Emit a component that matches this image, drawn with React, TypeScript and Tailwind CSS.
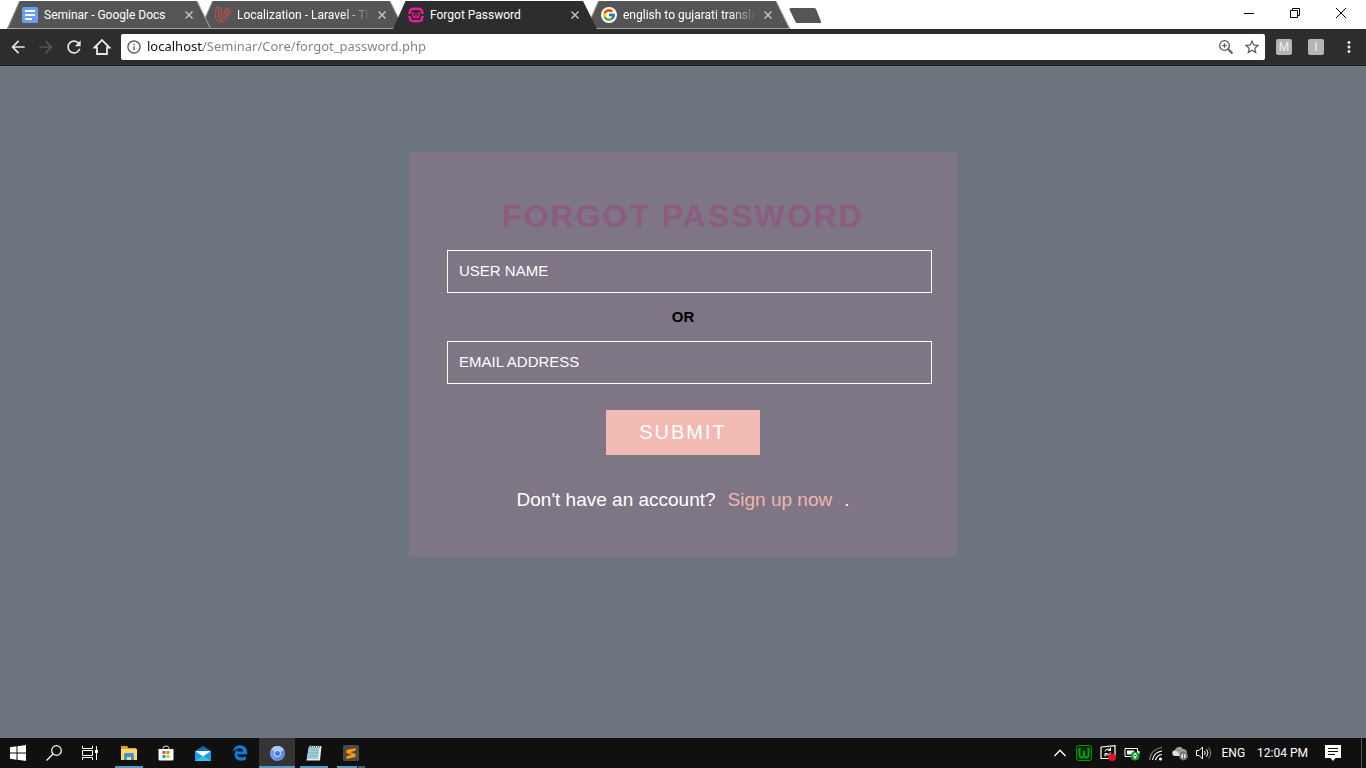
import type { ReactNode } from "react";
import { MdArrowBack, MdArrowForward, MdRefresh, MdStarBorder, MdMoreVert, MdInfoOutline } from "react-icons/md";
import { FcGoogle } from "react-icons/fc";
import { FaLaravel } from "react-icons/fa";
import { FaEdgeLegacy } from "react-icons/fa6";

function DocsIcon() {
  return (
    <svg viewBox="0 0 16 16" className="size-4">
      <rect width="16" height="16" rx="1.5" fill="#689df6" />
      <path d="M3 3h10v2H3zM3 7h10v2H3zM3 11h7v2H3z" fill="#fff" />
    </svg>
  );
}

function WampIcon() {
  return (
    <svg viewBox="0 0 16 16" className="size-4" fill="none" stroke="#f0149b">
      <path d="M1.800 7V5.500Q1.800 1.800 5.500 1.800h5q3.700 0 3.700 3.700V7M1.800 9v1.500q0 3.700 3.700 3.700h5q3.700 0 3.700-3.700V9" strokeWidth="2.400" />
      <path d="M0 6.500h3M0 9.500h3M13 6.500h3M13 9.500h3" strokeWidth="1" />
      <path d="M5 5v3.800Q5 10.700 6.500 10.700T8 9V6.500V9Q8 10.700 9.500 10.700T11 8.800V5" stroke="none" />
      <path d="M5 5v4.200l1.200 1.300h.8L8 9.500V6.500v3l1 1h.8L11 9.200V5" strokeWidth="1.400" />
    </svg>
  );
}

function GoogleBadge() {
  return (
    <span className="flex size-4 items-center justify-center rounded-full bg-white">
      <FcGoogle size={14} />
    </span>
  );
}

type TabInfo = { title: string; icon: ReactNode; active?: boolean; faded?: boolean; layer: string };

const tabs: TabInfo[] = [
  { title: "Seminar - Google Docs", icon: <DocsIcon />, layer: "z-30" },
  { title: "Localization - Laravel - Th", icon: <FaLaravel size={17} color="#c1514d" stroke="#c1514d" strokeWidth={14} />, faded: true, layer: "z-20" },
  { title: "Forgot Password", icon: <WampIcon />, active: true, layer: "z-40" },
  { title: "english to gujarati transla", icon: <GoogleBadge />, faded: true, layer: "z-10" },
];

function Tab({ title, icon, active, faded, layer }: TabInfo) {
  return (
    <div className={`relative -mr-[11px] flex h-[29px] w-[204px] shrink items-center pl-[15px] pr-[14px] ${layer}`}>
      <svg viewBox="0 0 204 29" preserveAspectRatio="none" className="absolute inset-0 -z-10 size-full">
        <path d="M0 29 L12.500 1 H190 L204 29Z" fill={active ? "#2d2d2d" : "#555"} />
        {!active && <path d="M12.500 1 L.5 28.500 H203.500 L190 1" fill="none" stroke="#a5a5a5" />}
      </svg>
      <span className="flex size-4 shrink-0 items-center justify-center">{icon}</span>
      <button
        type="button"
        className={`ml-[6px] min-w-0 flex-1 overflow-hidden whitespace-nowrap text-left text-xs text-white ${faded ? "mask-r-from-80%" : ""}`}
      >
        {title}
      </button>
      <button type="button" aria-label={`Close ${title}`} className="ml-1 flex size-4 items-center justify-center">
        <svg viewBox="0 0 8 8" className="size-2" stroke="#c0c0c0" strokeWidth="1.500">
          <path d="M.5.5l7 7M7.500.5l-7 7" />
        </svg>
      </button>
    </div>
  );
}

function TabStrip() {
  return (
    <div className="flex h-[29px] items-start bg-white font-[Roboto,sans-serif]">
      <div className="isolate flex min-w-0 pl-[7px]">
        {tabs.map((t) => (
          <Tab key={t.title} {...t} />
        ))}
      </div>
      <button type="button" aria-label="New tab" className="ml-[10px] mt-2">
        <svg viewBox="0 0 33 15" className="h-[15px] w-[33px]">
          <path d="M2 0h23q1.500 0 2 1l5 12.500q.5 1.500-1 1.500H8.500q-1.500 0-2-1L.5 1.500Q0 0 2 0z" fill="#555" />
        </svg>
      </button>
      <div className="ml-auto flex pr-[2px]">
        <button type="button" aria-label="Minimize" className="flex h-[26px] w-[46px] items-center justify-center">
          <svg viewBox="0 0 10 10" className="size-[10px]" stroke="#000"><path d="M0 5.500h10" /></svg>
        </button>
        <button type="button" aria-label="Restore" className="flex h-[26px] w-[46px] items-center justify-center">
          <svg viewBox="0 0 10 10" className="size-[10px]" stroke="#000" fill="none"><path d="M.5 2.500h7v7h-7zM2.500 2.500v-2h7v7h-2" /></svg>
        </button>
        <button type="button" aria-label="Close" className="flex h-[26px] w-[46px] items-center justify-center">
          <svg viewBox="0 0 10 10" className="size-[10px]" stroke="#000"><path d="M0 0l10 10M10 0L0 10" /></svg>
        </button>
      </div>
    </div>
  );
}

function ToolButton({ label, children }: { label: string; children: ReactNode }) {
  return (
    <button type="button" aria-label={label} className="flex size-7 shrink-0 items-center justify-center">
      {children}
    </button>
  );
}

function Extension({ letter }: { letter: string }) {
  return (
    <button type="button" className="flex size-4 items-center justify-center rounded-xs bg-[#b5b5b5] font-[Roboto,sans-serif] text-xs text-[#eee]">
      {letter}
    </button>
  );
}

function Toolbar() {
  return (
    <div className="flex h-[37px] items-center border-b border-[#1c1c1c] bg-[#2d2d2d] pl-1">
      <ToolButton label="Back"><MdArrowBack size={20} color="#e6e6e6" /></ToolButton>
      <ToolButton label="Forward"><MdArrowForward size={20} color="#555" /></ToolButton>
      <ToolButton label="Reload"><MdRefresh size={20} color="#e6e6e6" /></ToolButton>
      <ToolButton label="Home">
        <svg viewBox="0 0 18 18" className="size-[18px]" fill="none" stroke="#e6e6e6" strokeWidth="1.800">
          <path d="M1.500 9.500 9 2l7.500 7.500H14V16H4V9.500z" />
        </svg>
      </ToolButton>
      <div className="ml-[5px] flex h-[26px] min-w-0 flex-1 items-center rounded-xs bg-white pl-[5px] pr-1">
        <MdInfoOutline size={16} color="#5a5a5a" className="shrink-0" />
        <input
          type="text"
          aria-label="Address"
          defaultValue="localhost/Seminar/Core/forgot_password.php"
          className="ml-[5px] min-w-0 flex-1 bg-[linear-gradient(to_right,#111_56px,#808080_56px)] bg-clip-text text-[13px] text-transparent outline-none"
        />
        <button type="button" aria-label="Zoom" className="mr-1 flex size-[26px] items-center justify-center">
          <svg viewBox="0 0 16 16" className="size-4" fill="none" stroke="#5a5a5a" strokeWidth="1.300"><circle cx="6.500" cy="6.500" r="4.800" /><path d="M10 10l4.500 4.500" strokeWidth="1.900" /><path d="M6.500 4.200v4.600M4.200 6.500h4.600" strokeWidth="1.200" /></svg>
        </button>
        <button type="button" aria-label="Bookmark this page" className="flex size-[18px] items-center justify-center"><MdStarBorder size={18} color="#5a5a5a" /></button>
      </div>
      <div className="flex items-center pl-[11px]">
        <div className="flex gap-4">
          <Extension letter="M" />
          <Extension letter="I" />
        </div>
        <button type="button" aria-label="Menu" className="ml-2 flex w-[34px] justify-center"><MdMoreVert size={18} color="#e6e6e6" /></button>
      </div>
    </div>
  );
}

function Field({ type, label }: { type: string; label: string }) {
  return (
    <input
      type={type}
      aria-label={label}
      placeholder={label}
      className="block h-[43px] w-[calc(100%+13px)] border border-white bg-transparent px-[11px] pb-[2px] text-[15px] text-white outline-none placeholder:text-white placeholder:opacity-100"
    />
  );
}

function ForgotPassword() {
  return (
    <main className="flex-1 bg-[#6c757d] pt-[86px] font-['Liberation_Sans',Arial,sans-serif]">
      <form className="mx-auto w-full max-w-[548px] bg-[#7e7585] px-[38px] pb-[45px] pt-[44px] text-center">
        <h1 className="mb-[14px] text-[32px] font-bold leading-10 tracking-[2px] text-[#8d5c80]">FORGOT PASSWORD</h1>
        <Field type="text" label="USER NAME" />
        <p className="my-3 text-[15px] font-bold leading-6 text-black">OR</p>
        <Field type="email" label="EMAIL ADDRESS" />
        <button type="submit" className="mt-[26px] h-[45px] w-[154px] bg-[#f1bab2] pb-[2px] text-[20px] tracking-[2px] text-white">
          SUBMIT
        </button>
        <p className="mt-[33px] text-[19px] leading-6 text-white">
          Don't have an account?
          <a href="#signup" className="mx-3 text-[#f1b5ad]">Sign up now</a>
          .
        </p>
      </form>
    </main>
  );
}

function TaskItem({ label, running, selected, stacked, children }: { label: string; running?: boolean; selected?: boolean; stacked?: boolean; children: ReactNode }) {
  return (
    <button
      type="button"
      aria-label={label}
      className={`relative flex h-[30px] w-9 items-center justify-center ${selected ? "bg-[#343434]" : ""}`}
    >
      {children}
      {running && (
        <span className={`absolute bottom-0 flex h-[2px] bg-[#4f9cc0] ${selected ? "inset-x-0" : "inset-x-1"}`}>
          {stacked && <span className="ml-auto h-full w-2 border-l border-[#101010] bg-[#35677f]" />}
        </span>
      )}
    </button>
  );
}

function Tray({ label, children }: { label: string; children: ReactNode }) {
  return (
    <button type="button" aria-label={label} className="flex h-[30px] w-6 items-center justify-center">
      {children}
    </button>
  );
}

function Taskbar() {
  return (
    <footer className="flex h-[30px] items-center bg-[#101010] font-[Roboto,sans-serif] text-white">
      <TaskItem label="Start">
        <svg viewBox="0 0 16 16" className="size-4" fill="#fff"><path d="M0 2.200 6.500 1.300v6.200H0zM7.500 1.150 16 0v7.500H7.500zM0 8.500h6.500v6.200L0 13.800zM7.500 8.500H16V16l-8.500-1.150z" /></svg>
      </TaskItem>
      <TaskItem label="Search">
        <svg viewBox="0 0 16 16" className="size-4" fill="none" stroke="#fff" strokeWidth="1.200"><circle cx="10.500" cy="5.500" r="4.800" /><path d="M7 9 .5 15.500" /></svg>
      </TaskItem>
      <TaskItem label="Task view">
        <svg viewBox="0 0 16 16" className="size-4" fill="none" stroke="#fff"><path d="M.5 1v2.500h10V1M.5 15v-2.500h10V15M.5 5.500h10v5H.5zM14.500 1v4M14.500 8v7" /><path d="M13 5h3v3h-3z" fill="#fff" stroke="none" /></svg>
      </TaskItem>
      <div className="ml-[3px] flex gap-px">
        <TaskItem label="File Explorer" running>
          <svg viewBox="0 0 16 14" className="h-[14px] w-4"><path d="M0 0h6l1.500 2H15v4H0z" fill="#e3a21a" /><path d="M0 3h16v11H0z" fill="#ffd766" /><path d="M3 14V8.500Q3 7 4.500 7h7Q13 7 13 8.500V14h-3v-3H6v3z" fill="#3b97dd" /></svg>
        </TaskItem>
        <TaskItem label="Store">
          <svg viewBox="0 0 16 16" className="size-4"><path d="M5 5V3.500Q5 1 8 1t3 2.500V5" fill="none" stroke="#ddd" /><path d="M.5 4h15v10q0 1.500-1.500 1.500H2Q.5 15.500.5 14z" fill="#fff" /><path d="M4.500 6H7.500v3H4.500z" fill="#f25022" /><path d="M8.500 6h3v3h-3z" fill="#7fba00" /><path d="M4.500 10h3v3h-3z" fill="#00a4ef" /><path d="M8.500 10h3v3h-3z" fill="#ffb900" /></svg>
        </TaskItem>
        <TaskItem label="Mail">
          <svg viewBox="0 0 16 15" className="h-[15px] w-4"><path d="M0 5 8 0l8 5v10H0z" fill="#0f6cb5" /><path d="M1 5h14v5H1z" fill="#f2f8fc" /><path d="M0 5l8 5.500L16 5v10H0z" fill="#1b9be2" /><path d="M0 15 8 9.500 16 15z" fill="#39bdf2" /></svg>
        </TaskItem>
        <TaskItem label="Edge"><FaEdgeLegacy size={16} color="#0b7fdc" /></TaskItem>
        <TaskItem label="Chromium" running selected>
          <svg viewBox="0 0 16 16" className="size-[15px]"><circle cx="8" cy="8" r="8" fill="#5b8ee5" /><path d="M8 8 1 4A8 8 0 0 1 15 4.200z" fill="#a9c7fa" /><path d="M8 8 1 4a8 8 0 0 0 5.500 11.800z" fill="#7199e2" /><circle cx="8" cy="8" r="3.600" fill="#d6e4fd" /><circle cx="8" cy="8" r="2.700" fill="#4179dc" /></svg>
        </TaskItem>
        <TaskItem label="Notepad" running>
          <svg viewBox="0 0 16 16" className="size-4"><path d="M3 1h12.500l-1.500 14.500H.5z" fill="#e9eff0" /><path d="M3 2h10.500L12 14H1z" fill="#9fd0d8" /><path d="M3 5h10M2.500 8h10M2 11h10" stroke="#7fb3bd" /><path d="M3 1.500h12" stroke="#666" strokeDasharray="1 1" strokeWidth="2" /></svg>
        </TaskItem>
        <TaskItem label="Sublime Text" running stacked>
          <svg viewBox="0 0 16 16" className="size-4"><rect width="16" height="16" rx="1.500" fill="#4a4a4a" /><path d="M12.500 3v2.800L7.500 7.300l5 1.700v3L3.500 14v-2.700l5-1.600-5-1.700V5z" fill="#ff9800" /></svg>
        </TaskItem>
      </div>
      <div className="ml-auto flex items-center">
        <Tray label="Show hidden icons">
          <svg viewBox="0 0 12 8" className="h-2 w-3" fill="none" stroke="#fff" strokeWidth="1.300"><path d="M.5 7 6 1.200 11.500 7" /></svg>
        </Tray>
        <Tray label="WampServer">
          <svg viewBox="0 0 16 16" className="size-4" fill="none"><rect x=".5" y=".5" width="15" height="15" rx="2" fill="#052d06" stroke="#0a8f10" /><path d="M3.500 3v8l1.500 1.500h1.500L8 11V6v5l1.500 1.500H11l1.500-1.500V3" stroke="#09a012" strokeWidth="2" /></svg>
        </Tray>
        <Tray label="Windows Update">
          <svg viewBox="0 0 16 16" className="size-4" fill="none" stroke="#fff"><path d="M1 2 15 .7v10.800M1 2v11.500h8" strokeWidth="1.200" /><path d="M5 6.500q.5-3 4-2.500l1.500 1M10.500 2.500v3H8M10.500 7.500q-.5 3-4 2.500L5 9M5 11.500v-3h2.500" /><circle cx="12.200" cy="12.200" r="3.800" fill="#e81123" stroke="none" /></svg>
        </Tray>
        <Tray label="Battery">
          <svg viewBox="0 0 16 16" className="size-4"><path d="M1 3.500h12.500v8H1z" fill="none" stroke="#fff" /><path d="M3 5.500h7v4H3zM14 6h1.500v3H14z" fill="#fff" /><circle cx="11" cy="11" r="4.500" fill="#139b32" /><path d="M11 8q3 2.500 0 5-3-2.500 0-5zM11 11v3" stroke="#fff" fill="none" /></svg>
        </Tray>
        <Tray label="Wi-Fi">
          <svg viewBox="0 0 16 16" className="ml-px size-4" fill="none" strokeWidth="1.200"><path d="M1.500 15Q3 4 14 2.500" stroke="#888" /><path d="M4.500 15Q6 7 14 6M7.500 15Q9 10 14 9.500" stroke="#fff" /><circle cx="12.500" cy="14" r="1.600" fill="#fff" /></svg>
        </Tray>
        <Tray label="OneDrive">
          <svg viewBox="0 0 16 16" className="size-4"><path d="M2.800 11a2.900 2.900 0 0 1 0-5.800A4.500 4.500 0 0 1 11 4a3.500 3.500 0 0 1 4 3.500V11z" fill="#999" /><path d="M2.800 11a2.900 2.900 0 0 1 0-5.500q2 0 7 5.500z" fill="#e0e0e0" /><circle cx="11.500" cy="11" r="4.400" fill="#777" /><path d="M10.200 9v4M12.800 9v4" stroke="#fff" strokeWidth="1.200" /></svg>
        </Tray>
        <Tray label="Volume">
          <svg viewBox="0 0 16 16" className="size-4" fill="none" stroke="#fff"><path d="M.5 5.500H3l3.500-3.500v12L3 10.500H.5z" /><path d="M8.500 6q1.500 2 0 4M10.500 4.200q3 3.800 0 7.600" /><path d="M12.500 2.500q4.500 5.500 0 11" stroke="#888" /></svg>
        </Tray>
        <span className="ml-[6px] text-xs">ENG</span>
        <time className="ml-3 text-xs">12:04 PM</time>
        <button type="button" aria-label="Notifications" className="ml-[17px] mr-5 flex">
          <svg viewBox="0 0 16 16" className="size-4"><path d="M0 0h16v13h-5.500L8 16l-2.500-3H0z" fill="#fff" /><path d="M3 3.500h10M3 6.500h10M3 9.500h7" stroke="#101010" /></svg>
        </button>
        <span className="mr-1 h-[30px] w-px bg-[#555]" />
      </div>
    </footer>
  );
}

export default function App() {
  return (
    <div className="flex min-h-screen flex-col font-['Noto_Sans','Open_Sans',sans-serif]">
      <header>
        <TabStrip />
        <Toolbar />
      </header>
      <ForgotPassword />
      <Taskbar />
    </div>
  );
}
